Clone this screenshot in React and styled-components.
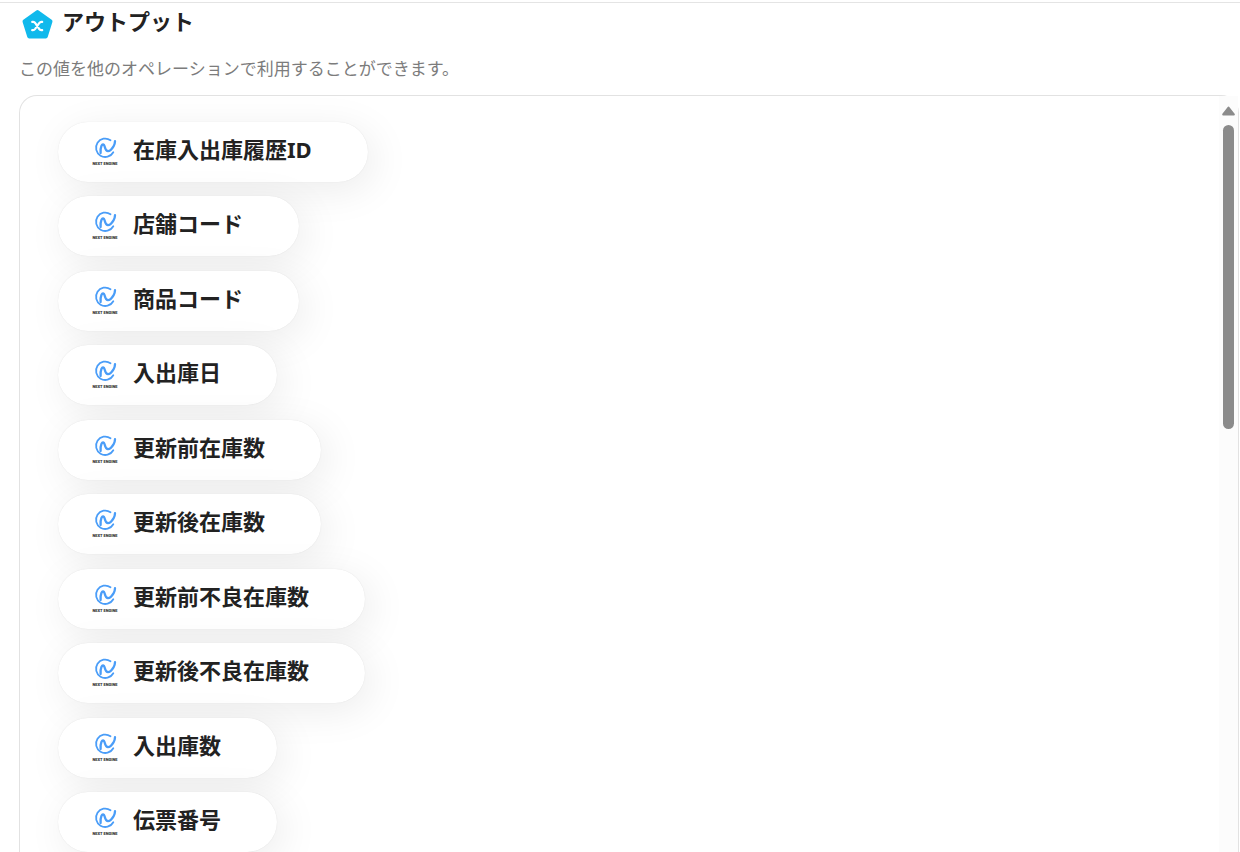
import React from "react";
import styled, { createGlobalStyle } from "styled-components";

const GlobalStyle = createGlobalStyle`
  *, *::before, *::after { box-sizing: border-box; }
  body {
    margin: 0;
    background: #fff;
    color: #222;
    font-family: "Noto Sans", "Noto Sans CJK JP", sans-serif;
  }
`;

const Page = styled.main`
  display: flex;
  flex-direction: column;
  height: 100vh;
  padding-top: 2px;
  overflow: hidden;
`;

const Content = styled.div`
  display: flex;
  flex: 1;
  flex-direction: column;
  min-height: 0;
  padding: 0 1px 0 19px;
  border-top: 1px solid #e4e4e4;
`;

const Header = styled.header`
  display: flex;
  flex: none;
  align-items: flex-start;
  gap: 9px;
  height: 53px;
  padding: 5px 0 0 3px;
`;

const Badge = styled.svg`
  display: block;
  flex: none;
  width: 31px;
  height: 32px;
`;

const Title = styled.h1`
  margin: 0;
  font-size: 22px;
  font-weight: 700;
  line-height: 26px;
`;

const Description = styled.p`
  flex: none;
  height: 39px;
  margin: 0;
  color: #7c7c7c;
  font-size: 17px;
  font-weight: 400;
  line-height: 26px;
`;

const Panel = styled.section`
  display: flex;
  flex: 1;
  min-height: 0;
  border: 1px solid #e2e2e2;
  border-bottom: 0;
  border-radius: 18px 18px 0 0;
`;

const OutputList = styled.ul`
  flex: 1;
  margin: 0;
  padding: 26px 38px;
  overflow-y: auto;
  list-style: none;
  scrollbar-width: none;
`;

const OutputItem = styled.li`
  display: flex;
  margin-bottom: 14px;

  &:nth-child(even) {
    margin-bottom: 15px;
  }
`;

const OutputButton = styled.button`
  display: flex;
  align-items: flex-start;
  gap: 14px;
  height: 60px;
  padding: 14px 56px 0 33px;
  border: 0;
  border-radius: 30px;
  background: #fff;
  box-shadow: 0 0 1px rgba(0, 0, 0, 0.12), 6px 8px 40px rgba(0, 0, 0, 0.08);
  color: #222;
  font-family: inherit;
  font-size: 22px;
  font-weight: 700;
  line-height: 26px;
  white-space: nowrap;
  cursor: pointer;
`;

const Logo = styled.svg`
  display: block;
  flex: none;
  width: 28px;
  height: 30px;
`;

const Rail = styled.div`
  display: flex;
  flex: none;
  flex-direction: column;
  align-items: center;
  gap: 9px;
  width: 19px;
  padding-top: 10px;
  background: #fcfcfc;
`;

const ScrollUp = styled.button`
  display: block;
  width: 13px;
  height: 10px;
  padding: 0;
  border: 0;
  background: none;

  svg { display: block; }
`;

const Thumb = styled.div`
  width: 11px;
  height: 304px;
  border-radius: 6px;
  background: #8b8b8b;
`;

const outputs = [
  "在庫入出庫履歴ID",
  "店舗コード",
  "商品コード",
  "入出庫日",
  "更新前在庫数",
  "更新後在庫数",
  "更新前不良在庫数",
  "更新後不良在庫数",
  "入出庫数",
  "伝票番号",
];

function NextEngineLogo() {
  return (
    <Logo viewBox="0 0 28 30" aria-hidden="true">
      <g fill="none" stroke="#4a9df8" strokeLinecap="round">
        <path d="M19.5 4.2A9.2 9.2 0 1 0 22.3 16.2" strokeWidth="1.8" />
        <path
          d="M9.6 17C9.5 14.6 9.6 11.6 10.5 9.7C11.4 7.9 13 8.2 13.5 10C14.2 12.6 14.6 15.2 17 15.2C19.2 15.2 21.2 12.6 22.5 10.4C23.5 8.6 24 7 24 5.2"
          strokeWidth="2.3"
        />
      </g>
      <text
        x="14"
        y="28.5"
        textAnchor="middle"
        fontFamily="Roboto, sans-serif"
        fontSize="4"
        fontWeight="900"
        fill="#333"
      >
        NEXT ENGINE
      </text>
    </Logo>
  );
}

export default function App() {
  return (
    <>
      <GlobalStyle />
      <Page>
        <Content>
          <Header>
            <Badge viewBox="0 0 31 32" aria-hidden="true">
              <path
                d="M15.5 4L28.5 13.4L23.8 28.5H7.2L2.5 13.4Z"
                fill="#10b9ec"
                stroke="#10b9ec"
                strokeWidth="4"
                strokeLinejoin="round"
              />
              <path
                d="M10.2 13.9H11.2C12.2 13.9 12.8 14.4 13.3 15.2L17.1 20.9C17.6 21.7 18.2 22.2 19.2 22.2H20.2M20.2 13.9H19.4C18.4 13.9 17.8 14.4 17.2 15.2L13.2 20.9C12.6 21.7 12 22.2 11 22.2H10.2"
                fill="none"
                stroke="#fff"
                strokeWidth="2.2"
                strokeLinecap="round"
              />
            </Badge>
            <Title>アウトプット</Title>
          </Header>
          <Description>この値を他のオペレーションで利用することができます。</Description>
          <Panel>
            <OutputList>
              {outputs.map((name) => (
                <OutputItem key={name}>
                  <OutputButton type="button">
                    <NextEngineLogo />
                    <span>{name}</span>
                  </OutputButton>
                </OutputItem>
              ))}
            </OutputList>
            <Rail>
              <ScrollUp type="button" aria-label="上へスクロール">
                <svg width="13" height="10" viewBox="0 0 13 10">
                  <path
                    d="M6.5 1.5L11.8 8.4H1.2Z"
                    fill="#8b8b8b"
                    stroke="#8b8b8b"
                    strokeWidth="2"
                    strokeLinejoin="round"
                  />
                </svg>
              </ScrollUp>
              <Thumb />
            </Rail>
          </Panel>
        </Content>
      </Page>
    </>
  );
}
